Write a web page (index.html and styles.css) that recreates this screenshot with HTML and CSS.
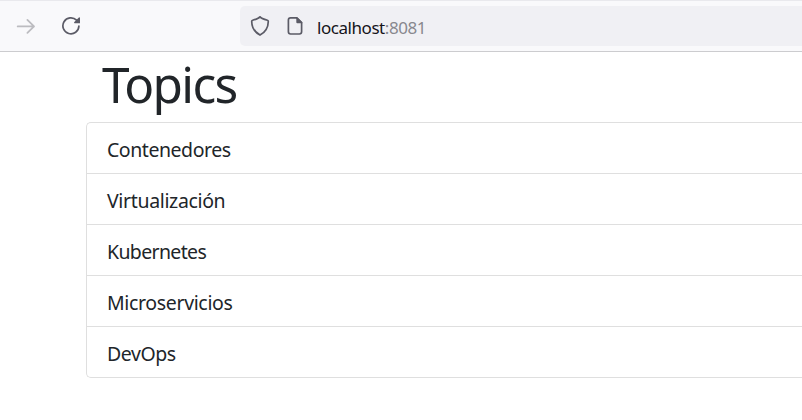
FILE: index.html
```html
<!DOCTYPE html>
<html lang="es">
<head>
<meta charset="utf-8">
<title>Topics</title>
<link rel="stylesheet" href="styles.css">
</head>
<body>
<header class="toolbar">
  <svg class="forward" width="20" height="20" viewBox="0 0 20 20"><path d="M1.7 10.4H18M11.4 3.9L18 10.4L11.4 16.9"/></svg>
  <svg class="reload" width="20" height="20" viewBox="0 0 20 20"><path class="line" d="M16.9 10A8 8 0 1 1 14.6 4.2"/><path class="fill" d="M18 1.7V7.3H12.5Q11.600 6.800 12.300 6.100L16.900 1.600Q17.800 .900 18 1.700Z"/></svg>
  <div class="address">
    <svg width="20" height="22" viewBox="0 0 20 22"><path class="line" d="M10 1.800Q11 3.500 17.500 5.300Q18.300 5.500 18.300 6.400C18.200 13.200 15.500 17 10 20.100C4.500 17 1.800 13.200 1.700 6.400Q1.700 5.500 2.500 5.300Q9 3.500 10 1.800Z"/></svg>
    <svg class="page" width="16" height="20" viewBox="0 0 16 20"><path class="line" d="M9.800 1.900H3.600Q1.400 1.900 1.400 4.100V15.800Q1.400 18 3.600 18H12.400Q14.600 18 14.600 15.800V6.700Z"/><path class="fill" d="M9.300 1.200H10.200L15.300 6.300V7.200H10.300Q9.300 7.200 9.300 6.200Z"/></svg>
    <span class="url"><span class="host">localhost</span><span class="port">:8081</span></span>
  </div>
</header>
<main>
  <h1>Topics</h1>
  <ul class="list">
    <li>Contenedores</li>
    <li class="wide">Virtualización</li>
    <li class="tight">Kubernetes</li>
    <li class="wide">Microservicios</li>
    <li>DevOps</li>
  </ul>
</main>
</body>
</html>
```
FILE: styles.css
```css
* { box-sizing: border-box; }
body {
  margin: 0;
  background: #fff;
  color: #212529;
  font-family: "Segoe UI", "Noto Sans", sans-serif;
  overflow: hidden;
}
.toolbar {
  display: flex;
  height: 52px;
  padding: 5px 0 0 16px;
  background: #f9f9fb;
  border-top: 1px solid #e9e9ed;
  border-bottom: 1px solid #cccccf;
}
svg { flex: none; fill: none; }
.forward { margin-top: 10px; stroke: #bcbcc0; stroke-width: 1.8; stroke-linecap: round; stroke-linejoin: round; }
.reload { margin: 10px 0 0 26px; }
.line { stroke: #5b5b66; stroke-width: 1.7; stroke-linejoin: round; stroke-linecap: round; }
.fill { fill: #5b5b66; }
.address {
  display: flex;
  align-items: center;
  flex: 1;
  height: 40px;
  margin-left: 158px;
  padding-left: 10px;
  background: #f0f0f4;
  border-radius: 5px 0 0 5px;
}
.page { margin-left: 17px; }
.url { margin-left: 14px; font-size: 17px; letter-spacing: -0.45px; line-height: 24px; padding-top: 3px; }
.host { color: #15141a; }
.port { color: #88888e; }
main { padding-left: 86px; }
h1 {
  margin: 0;
  padding-left: 16px;
  height: 70px;
  font-size: 49.5px;
  font-weight: 400;
  line-height: 65px;
  letter-spacing: -1.7px;
}
.list {
  margin: 0;
  padding: 0;
  list-style: none;
  border: 1px solid #dfdfdf;
  border-right: 0;
  border-radius: 5px 0 0 5px;
}
li {
  height: 51px;
  padding: 12px 20px;
  font-size: 19.5px;
  line-height: 30px;
  letter-spacing: -0.45px;
  border-bottom: 1px solid #dfdfdf;
}
li:last-child { height: 50px; border-bottom: 0; }
.wide { letter-spacing: -0.35px; }
.tight { letter-spacing: -0.65px; }
```
